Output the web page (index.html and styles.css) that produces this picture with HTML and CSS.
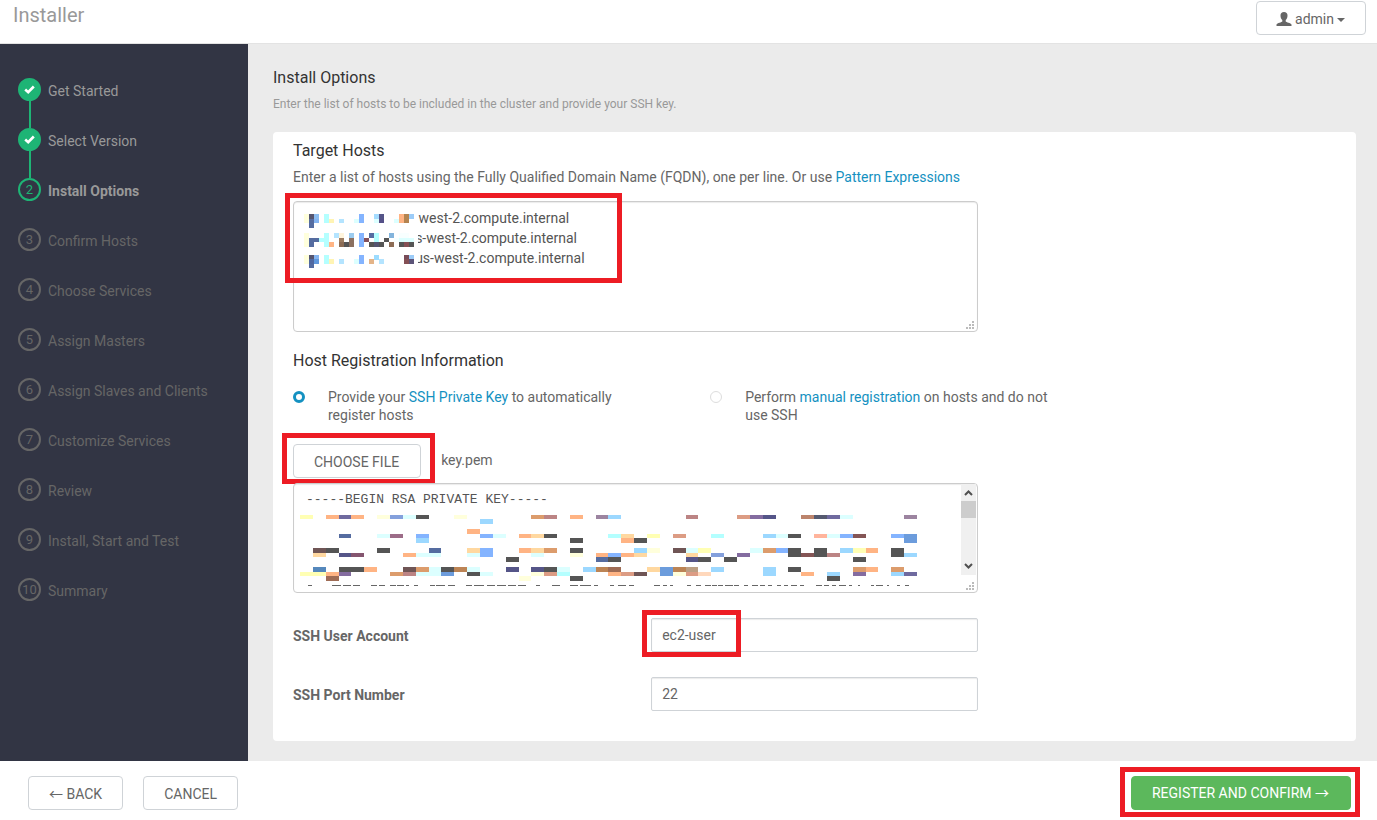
FILE: index.html
```html
<!DOCTYPE html>
<html lang="en">
<head>
<meta charset="utf-8">
<title>Installer</title>
<link rel="stylesheet" href="styles.css">
</head>
<body>
<header class="topbar">
  <h1 class="topbar-title">Installer</h1>
  <button type="button" class="btn btn-user">
    <svg width="16" height="14" viewBox="0 0 16 14" aria-hidden="true"><path fill="#666" d="M8 0C5.800 0 4.400 1.400 4.500 3.500c0 2 .700 3.600 1.800 4.600v1.300C5.900 10.300 1.200 10.700.5 12.500V14h15v-1.500c-.700-1.800-5.400-2.200-5.800-3.100V8.100c1.100-1 1.800-2.600 1.800-4.600C11.600 1.400 10.200 0 8 0z"/></svg>
    <span>admin</span>
    <span class="caret"></span>
  </button>
</header>

<div class="body">
  <nav class="sidebar">
    <ol class="steps">
      <li class="step done"><span class="dot"><svg width="11" height="9" viewBox="0 0 11 9" aria-label="done"><path d="M1.200 4.600 4.200 7.200 9.800 1.500" fill="none" stroke="#fff" stroke-width="2.600"/></svg></span><span>Get Started</span></li>
      <li class="step done"><span class="dot"><svg width="11" height="9" viewBox="0 0 11 9" aria-label="done"><path d="M1.200 4.600 4.200 7.200 9.800 1.500" fill="none" stroke="#fff" stroke-width="2.600"/></svg></span><span>Select Version</span></li>
      <li class="step active"><span class="dot">2</span><span>Install Options</span></li>
      <li class="step"><span class="dot">3</span><span>Confirm Hosts</span></li>
      <li class="step"><span class="dot">4</span><span>Choose Services</span></li>
      <li class="step"><span class="dot">5</span><span>Assign Masters</span></li>
      <li class="step"><span class="dot">6</span><span>Assign Slaves and Clients</span></li>
      <li class="step"><span class="dot">7</span><span>Customize Services</span></li>
      <li class="step"><span class="dot">8</span><span>Review</span></li>
      <li class="step"><span class="dot">9</span><span>Install, Start and Test</span></li>
      <li class="step"><span class="dot">10</span><span>Summary</span></li>
    </ol>
  </nav>

  <main class="main">
    <h2 class="heading">Install Options</h2>
    <p class="subheading">Enter the list of hosts to be included in the cluster and provide your SSH key.</p>

    <form class="panel">
      <h3 class="heading"><label for="hosts">Target Hosts</label></h3>
      <p class="hint">Enter a list of hosts using the Fully Qualified Domain Name (FQDN), one per line. Or use <a href="#">Pattern Expressions</a></p>
      <div class="column field">
        <textarea id="hosts" class="area area-hosts" spellcheck="false">
                                 west-2.compute.internal
                                s-west-2.compute.internal
                                us-west-2.compute.internal</textarea>
        <svg class="mask mask-hosts" id="hosts-mask" width="115" height="62" viewBox="0 0 115 62" shape-rendering="crispEdges" aria-hidden="true"></svg>
        <svg class="grip" width="8" height="8" viewBox="0 0 8 8" aria-hidden="true"><path fill="#bbb" d="M6 0h2v2h-2zM3 3h2v2h-2zM6 3h2v2h-2zM0 6h2v2h-2zM3 6h2v2h-2zM6 6h2v2h-2z"/></svg>
        <span class="mark mark-hosts"></span>
      </div>

      <h3 class="heading heading-reg">Host Registration Information</h3>
      <div class="choices">
        <div class="choice"><input type="radio" name="reg" id="reg-ssh" checked><label for="reg-ssh">Provide your <a href="#">SSH Private Key</a> to automatically register hosts</label></div>
        <div class="choice"><input type="radio" name="reg" id="reg-manual"><label for="reg-manual">Perform <a href="#">manual registration</a> on hosts and do not use SSH</label></div>
      </div>

      <div class="file">
        <div class="field"><button type="button" class="btn btn-file">CHOOSE FILE</button><span class="mark mark-file"></span></div>
        <span class="file-name">key.pem</span>
      </div>

      <div class="column field field-key">
        <textarea id="key" class="area area-key" aria-label="SSH private key" spellcheck="false">-----BEGIN RSA PRIVATE KEY-----</textarea>
        <svg class="mask mask-key" id="key-mask" width="620" height="74" viewBox="0 0 620 74" shape-rendering="crispEdges" aria-hidden="true">
          <path stroke="#666" d="M8 71.500h4m20 0h9m2 0h8m2 0h7m11 0h6m2 0h6m5 0h6m1 0h7m2 0h3m5 0h4m12 0h5m1 0h9m3 0h7m11 0h6m2 0h10m3 0h8m2 0h9m2 0h8m2 0h8m10 0h4m12 0h8m10 0h8m2 0h11m3 0h4m12 0h4m4 0h8m3 0h5m20 0h6m3 0h4m3 0h3m14 0h4m5 0h5m4 0h6m1 0h5m1 0h5m2 0h8m1 0h5m5 0h4m4 0h6m2 0h5m3 0h4m5 0h4m3 0h4m3 0h6m3 0h4m12 0h6m2 0h5m3 0h4m3 0h7m3 0h3m6 0h2m11 0h3m2 0h7m4 0h2m8 0h3m5 0h4"/>
        </svg>
        <svg class="scroll" width="15" height="91" viewBox="0 0 15 91" aria-hidden="true"><path fill="#f0f0f0" d="M0 0h15v91H0z"/><path fill="#cdcdcd" d="M0 17h15v17H0z"/><path d="M4 11l3.500-3.500L11 11M4 80l3.500 3.500L11 80" fill="none" stroke="#505050" stroke-width="2"/></svg>
        <svg class="grip" width="8" height="8" viewBox="0 0 8 8" aria-hidden="true"><path fill="#bbb" d="M6 0h2v2h-2zM3 3h2v2h-2zM6 3h2v2h-2zM0 6h2v2h-2zM3 6h2v2h-2zM6 6h2v2h-2z"/></svg>
      </div>

      <div class="column row">
        <label for="user">SSH User Account</label>
        <div class="field"><input class="text" type="text" id="user" value="ec2-user"><span class="mark mark-user"></span></div>
      </div>
      <div class="column row">
        <label for="port">SSH Port Number</label>
        <div class="field"><input class="text" type="text" id="port" value="22"></div>
      </div>
    </form>
  </main>
</div>

<footer class="footer">
  <button type="button" class="btn"><span class="arrow">←</span> BACK</button>
  <button type="button" class="btn">CANCEL</button>
  <div class="field field-next"><button type="button" class="btn btn-next">REGISTER AND CONFIRM <span class="arrow">→</span></button><span class="mark mark-next"></span></div>
</footer>
<script src="mask.js"></script>
</body>
</html>
```
FILE: styles.css
```css
* { box-sizing: border-box; }

body {
  margin: 0;
  min-height: 100vh;
  display: flex;
  flex-direction: column;
  background: #fff;
  color: #666;
  font: 14px/20px Roboto, "Liberation Sans", sans-serif;
}

h1, h2, h3, p, ol { margin: 0; padding: 0; font-weight: 400; }
a { color: #1491c1; text-decoration: none; }

.topbar {
  display: flex;
  align-items: flex-start;
  justify-content: space-between;
  padding: 1px 11px 8px 13px;
  border-bottom: 1px solid #e3e3e3;
}
.topbar-title { font-size: 20px; line-height: 28px; color: #999; }

.btn {
  display: block;
  height: 34px;
  padding: 2px 20px 0;
  border: 1px solid #cfd3d7;
  border-radius: 4px;
  background: #fff;
  color: #666;
  font: inherit;
}
.btn-user { display: flex; align-items: center; gap: 3px; padding: 2px 20px 0 19px; }
.arrow { font-family: "Noto Sans CJK SC", sans-serif; line-height: 16px; }
.caret {
  border: 4px solid transparent;
  border-top-color: #666;
  border-bottom: 0;
  margin-top: 2px;
}

.body { flex: 1; display: flex; background: #ebebeb; }

.sidebar { width: 248px; flex: none; background: #323544; padding: 34px 18px; }
.steps { list-style: none; display: grid; gap: 27px; }
.step { position: relative; display: flex; gap: 7px; height: 23px; line-height: 26px; color: #666; }
.step.done, .step.active { color: #999; }
.step.active { font-weight: 700; }
.dot {
  display: flex;
  align-items: center;
  justify-content: center;
  width: 23px;
  height: 23px;
  border: 2px solid #666;
  border-radius: 50%;
  font-size: 13px;
  font-weight: 400;
  line-height: 19px;
}
.done .dot { background: #1eb475; border-color: #1eb475; }
.active .dot { color: #1eb475; border-color: #1eb475; }
.done::after {
  content: "";
  position: absolute;
  left: 11px;
  top: 23px;
  width: 2px;
  height: 27px;
  background: #1eb475;
}

.main { flex: 1; padding: 23px 21px 20px 25px; }
.heading { font-size: 16px; line-height: 22px; color: #333; }
.subheading { margin-top: 7px; font-size: 12px; line-height: 16px; color: #999; }

.panel { margin-top: 20px; padding: 8px 20px 30px; border-radius: 4px; background: #fff; }
.hint { margin-top: 5px; }
.column { width: 65.7%; }
.field { position: relative; }

.area {
  display: block;
  width: 100%;
  border: 1px solid #ccc;
  border-radius: 4px;
  resize: none;
  overflow: hidden;
  background: #fff;
  color: #555;
  box-shadow: inset 0 1px 1px rgba(0, 0, 0, .08);
}
.area-hosts { height: 131px; margin-top: 14px; padding: 6px 10px; font: inherit; white-space: pre; }
.area-key { height: 110px; padding: 7px 12px; font: 13px/18px "Liberation Mono", "Courier New", monospace; }
.grip { position: absolute; right: 4px; bottom: 3px; }
.scroll { position: absolute; right: 2px; top: 1px; }
.mask { position: absolute; }
.mask-hosts { left: 10px; top: 8px; }
.mask-key { left: 7px; top: 31px; }

.heading-reg { margin-top: 18px; }
.choices { display: grid; grid-template-columns: 1fr 1fr; width: 80%; margin-top: 16px; line-height: 18px; }
.choice { display: flex; align-items: flex-start; gap: 23px; padding-right: 64px; }
.choice + .choice { padding-right: 80px; margin-right: -8px; }
.choice input {
  appearance: none;
  flex: none;
  width: 12px;
  height: 12px;
  margin: 3px 0;
  border: 1px solid #ddd;
  border-radius: 50%;
}
.choice input:checked { border: 3px solid #1491c1; }

.file { display: flex; gap: 20px; margin-top: 20px; line-height: 32px; }
.btn-file { padding: 1px 21px 0 20px; }
.field-key { margin-top: 5px; }

.row { display: grid; grid-template-columns: 358fr 327fr; align-items: center; margin-top: 25px; }
.row label { padding-top: 2px; font-weight: 700; }
.text {
  display: block;
  width: 100%;
  height: 34px;
  padding: 0 10px;
  border: 1px solid #cfd3d7;
  border-radius: 2px;
  color: #666;
  font: inherit;
  box-shadow: inset 0 1px 1px rgba(0, 0, 0, .08);
}

.footer { display: flex; gap: 20px; padding: 15px 26px 10px 28px; }
.field-next { margin-left: auto; }
.btn-next { padding: 0 21px 0 20px; background: #5cb85c; border-color: #5cb85c; color: #fff; }

/* Call-out frames */
.mark { position: absolute; border: 5px solid #ed1c24; pointer-events: none; }
.mark-hosts { left: -8px; top: -8px; width: 337px; height: 90px; }
.mark-file { inset: -11px -14px -6px -11px; }
.mark-user { left: -9px; top: -8px; width: 99px; height: 47px; }
.mark-next { inset: -9px -9px -7px -11px; }
```
FILE: mask.js
```js
// Pixelated cover for private values: each band is [top, height, "column:colour ..."].
const HOSTS = [
  [5, 5, "0:ffffdc 1:555570 2:8bbcf0 4:b4ffff 11:84b4ff 14:a4dcff 15:555588 19:ffb484 20:b48450 21:9cccf8"],
  [10, 4, "0:ffffdc 1:556ca0 2:84b4f0 4:b4ffff 5:fff4b4 7:b4e4ff 10:dcffff 11:84b4ff 14:dcffff 15:555088 18:dcffff 19:ffb484 20:b48450"],
  [14, 5, "1:556ca0"],
  [24, 5, "0:ffffdc 4:b4ffff 6:b4e4ff 7:fff4dc 9:9cccf0 11:84b4ff 13:556ca0 14:b4ffff 17:84b4dc 19:f8ffff 20:f8ffff"],
  [29, 4, "0:ffffdc 1:556ca0 2:556ca0 3:b4ffff 4:b4ffff 7:9c7c60 9:8c7060 11:84b4ff 12:84505a 14:b4ffff 16:555 18:f8ffff 19:dcffff 20:dcffff 21:dcffff"],
  [33, 5, "0:ffffdc 1:556ca0 4:b4ffff 5:ffb484 7:8c6c55 8:555 9:8c7060 11:84b4ff 13:555 14:555570 15:555 17:8c6c55 19:555 20:845055 21:555"],
  [46, 5, "0:ffffdc 1:555570 2:84b4f0 4:b4ffff 11:84b4ff 14:9cdcff 20:784c58 21:9cccf8"],
  [50, 5, "0:ffffdc 1:5068a0 2:6098dc 4:b4ffff 5:fff4b4 7:b4e4ff 10:dcffff 11:84b4ff 13:e4b488 15:b4e4ff 20:845055 21:5c5478"],
  [55, 4, "1:556ca0"]
];

const KEY = [
  [1, 4, "0:ffffb4 2:ffb484 3:6f6a9f 4:ffb484 6:ffffdc 7:84a0dc 8:dcffff 9:555 12:ffffdc 18:dc9c6c 19:bc8484 21:ffb484 23:9c84a0 24:9cd8ff 30:bc8484 34:dc9c84 35:846ca0 36:555588 39:bc846c 40:555a70 41:6f6a9f 42:dcffff 47:9c84a0"],
  [5, 5, "14:9cd8ff"],
  [15, 5, "13:ffb484"],
  [20, 4, "3:556ca0 6:dcffff 7:9c6c88 9:84b4ff 14:84b4ff 15:dcffff 17:ffb484 18:ffd8a0 19:555 24:b4ffff 25:ffd8a0 27:ffffb4 29:dc9c84 32:b4ffff 36:9cd8ff 37:dcffff 38:555 40:ffb49c 41:dcffff 42:84b4ff 43:845555 46:84b4ff 47:6c9cdc"],
  [24, 5, "9:9cd8ff 21:555 25:ffb484 26:555 47:6c9cdc"],
  [34, 5, "1:6f5555 2:555 6:555 10:556ca0 13:ffd8a0 14:84b4ff 17:ffb484 18:ffd8a0 19:dc9c6c 21:555 26:9cd8ff 27:ffffdc 29:6f5555 30:dcffff 31:ffffb4 35:dcffff 36:dc9c6c 37:84b4ff 38:555 40:555 42:9cd8ff 43:ffffb4 44:ffb484 46:555"],
  [39, 4, "1:ffd8a0 3:555588 4:84556f 8:ffb484 9:dcffff 10:dcffff 13:dcffff 14:84b4ff 18:dcffff 21:ffffdc 23:ffb484 24:84b4ff 25:ffb484 26:ffd8a0 30:ffd8a0 32:84a0dc 34:846ca0 38:555 39:845555 40:555 41:bc8484 46:555 47:9cd8ff"],
  [43, 5, "16:555 23:556ca0 24:555 30:555588 31:555 33:555 43:555"],
  [53, 5, "1:5588bc 3:555 4:555 5:ffb484 8:6f5555 9:dc9c6c 10:dcffff 11:555 12:bc8455 13:dcffff 16:555588 18:555588 19:555 20:dcffff 22:9cd8ff 23:bc8455 24:9f6c55 27:ffd8a0 28:6c9cdc 29:bc8455 30:bc9f84 32:9cd8ff 36:9cd8ff 38:555 43:dc9c6c 44:ffb484 46:dc9c6c"],
  [58, 4, "0:ffffb4 1:ffffb4 2:ffb484 3:846ca0 7:dc9c6c 8:bc8484 9:dcffff 10:dcffff 11:6c9cdc 13:555 14:dcffff 18:ffffdc 19:dc9c84 20:b4ffff 24:ffb484 25:dc9c84 26:6f5555 28:6c9cdc 29:ffffdc 30:dc9c84 31:ffd8bc 36:9cd8ff 39:ffb484 41:9cd8ff 43:846ca0 46:9cd8ff 47:6f6a9f"],
  [62, 5, "2:9f6c55 17:ffffdc 21:555 41:555"]
];

function block(svg, x, y, width, height, fill) {
  const rect = document.createElementNS("http://www.w3.org/2000/svg", "rect");
  Object.entries({ x, y, width, height, fill }).forEach(([k, v]) => rect.setAttribute(k, v));
  svg.appendChild(rect);
}

function paint(id, bands, start, pitch) {
  const svg = document.getElementById(id);
  bands.forEach(([top, height, cells]) => cells.split(" ").forEach(cell => {
    const [n, colour] = cell.split(":");
    const left = Math.round(start + n * pitch);
    block(svg, left, top, Math.round(start + (+n + 1) * pitch) - left, height, "#" + colour);
  }));
}

block(document.getElementById("hosts-mask"), 0, 0, 115, 62, "#fff");
paint("hosts-mask", HOSTS, 1, 5);
paint("key-mask", KEY, 0, 12.854);
```
